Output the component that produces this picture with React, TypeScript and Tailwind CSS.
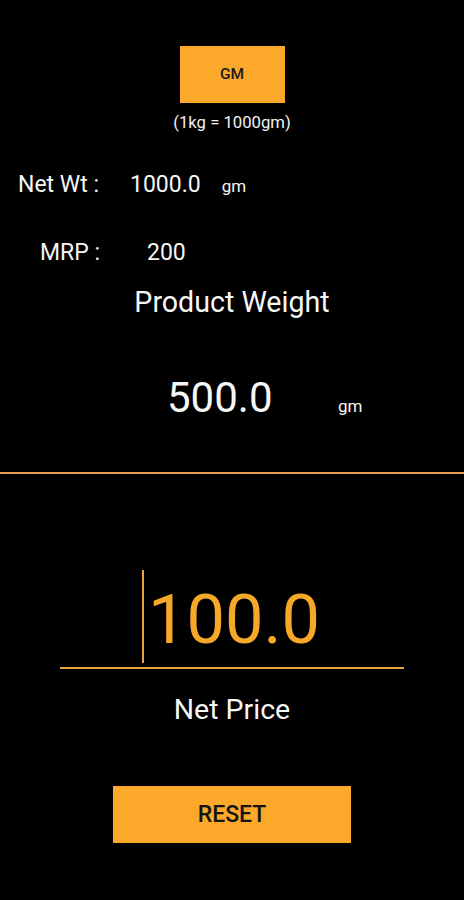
export default function App() {
  const font = { fontFamily: "Roboto, 'Noto Sans', sans-serif" };
  return (
    <div className="w-[464px] h-[900px] bg-black text-white flex flex-col overflow-hidden" style={font}>
      <div className="self-center mt-[46px] w-[105px] h-[57px] bg-[#fca82a] flex items-center justify-center text-[15.5px] font-medium text-[#1a1a1a]">
        GM
      </div>
      <div className="mt-[10px] h-[20px] leading-[20px] text-center text-[16.7px] text-[#f2f2f2]">(1kg = 1000gm)</div>

      <div className="mt-[39px] h-[26px] flex items-baseline leading-[26px] text-[23px] text-[#f5f5f5]">
        <span className="ml-[18px] w-[112px]">Net Wt :</span>
        <span>1000.0</span>
        <span className="ml-[21px] text-[17px]">gm</span>
      </div>

      <div className="mt-[42px] h-[26px] flex items-baseline leading-[26px] text-[23px] text-[#f5f5f5]">
        <span className="ml-[40px] w-[107px]">MRP :</span>
        <span>200</span>
      </div>

      <div className="mt-[20px] h-[32px] leading-[32px] text-center text-[28.6px] text-[#f7f7f7]">Product Weight</div>

      <div className="mt-[56px] h-[48px] flex items-baseline leading-[48px] text-[#f7f7f7]">
        <span className="ml-[167px] w-[171px] text-[42px]">500.0</span>
        <span className="text-[17px]">gm</span>
      </div>

      <div className="mt-[50px] h-[2px] w-full bg-[#e4a251]" />

      <div className="mt-[96px] ml-[60px] w-[344px] border-b-2 border-[#eba43f] pb-[4px] flex items-end">
        <div className="ml-[82px] w-[2px] h-[93px] bg-[#eba43f]" />
        <span className="ml-[4px] h-[83px] leading-[80px] text-[68.5px] text-[#f6a829]">100.0</span>
      </div>

      <div className="mt-[25px] h-[32px] leading-[32px] text-center text-[28.5px] text-[#f7f7f7]">Net Price</div>

      <div className="self-center mt-[60px] w-[238px] h-[57px] bg-[#fca82a] flex items-center justify-center pt-[2px] text-[23px] font-medium text-[#141414]">
        RESET
      </div>
    </div>
  );
}
